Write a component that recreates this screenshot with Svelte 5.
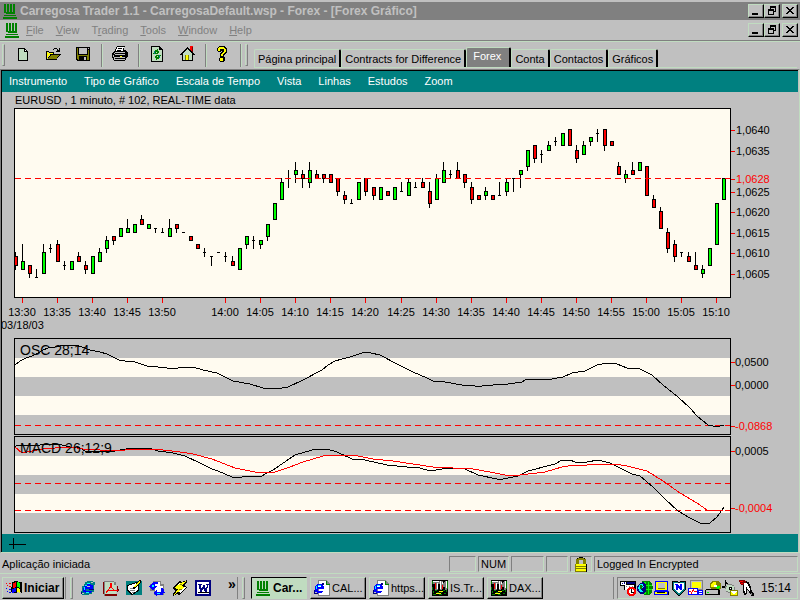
<script>
  const menus = ['File', 'View', 'Trading', 'Tools', 'Window', 'Help'];
  const hot = { Trading: 1 };
  const tools = [['new', 'open', 'save'], ['print'], ['refresh', 'home'], ['help']];
  const tabs = ['Página principal', 'Contracts for Difference', 'Forex', 'Conta', 'Contactos', 'Gráficos'];
  const chartMenus = ['Instrumento', 'Tipo de Gráfico', 'Escala de Tempo', 'Vista', 'Linhas', 'Estudos', 'Zoom'];
  const quick = ['ie', 'pdf', 'desktop', 'sync', 'bolt', 'word'];
  const tasks = [
    ['logo', 'Car...'],
    ['page', 'CAL...'],
    ['page', 'https...'],
    ['tm', 'IS.Tr...'],
    ['tm', 'DAX...']
  ];
  const tray = ['sched', 'globe', 'monitor', 'shield', 'display', 'drive', 'sound', 'pen'];

  // high, body top, body bottom, low (last three digits of 1,0xxx); kind: g rising, r falling, n flat
  const candles = `610 609 607 606 r|612 608 606 606 g|607 607 605 604 r|606 604 604 604 n|612 610 605 605 g|612 611 611 610 n
613 612 608 608 r|608 607 607 606 n|608 608 606 606 g|610 609 608 608 r|608 607 606 605 r|609 609 605 605 g
611 610 608 608 g|614 613 611 610 g|614 614 613 612 r|616 616 614 614 g|618 616 615 615 g|617 617 615 615 g
619 618 617 617 r|617 617 616 616 g|616 616 616 615 n|616 615 615 615 n|618 616 614 614 g|617 617 616 615 r
615 615 615 615 n|614 614 613 613 r|612 612 611 611 r|611 610 610 609 n|609 609 609 607 n|610 610 610 610 n
610 609 609 608 n|609 608 607 607 r|611 611 606 606 g|614 614 612 611 g|614 613 613 611 n|613 613 612 611 g
617 617 614 613 g|622 622 618 618 g|628 627 623 623 g|630 628 628 626 n|632 630 629 627 g|630 629 628 626 r
632 630 627 626 g|630 629 628 628 r|629 629 628 627 r|629 629 627 627 r|628 628 625 624 r|625 624 623 622 r
623 622 622 622 n|627 627 623 623 g|628 628 625 624 r|626 626 624 623 r|626 626 623 623 g|625 625 624 624 r
626 626 623 623 g|627 625 625 625 n|628 627 624 624 g|627 626 626 626 n|628 627 626 626 r|627 625 622 621 r
629 628 623 623 g|632 630 627 627 g|630 629 629 628 n|632 630 628 628 r|629 629 627 626 r|627 626 623 622 r
624 624 623 623 r|626 625 624 623 g|624 624 623 623 r|627 624 624 624 n|628 627 625 624 g|628 628 628 625 n
630 630 629 626 g|635 635 631 630 g|636 636 633 632 r|635 634 634 632 n|637 636 635 635 g|638 637 637 636 n
639 639 636 636 g|640 640 636 636 r|636 635 633 632 r|637 636 634 634 g|638 638 637 636 g|640 639 639 637 n
640 640 636 635 r|637 637 636 636 r|632 631 629 629 r|630 629 628 627 g|632 630 629 629 r|632 632 630 630 g
631 631 624 624 r|624 623 621 621 r|621 620 616 616 r|616 615 611 610 r|613 612 609 608 r|610 610 610 609 n
610 609 608 608 r|610 607 606 606 r|607 606 605 604 g|611 611 607 607 g|622 622 612 612 g|628 628 623 623 g`
    .split(/[|\n]/)
    .map((row, i) => {
      const [h, t, b, l, kind] = row.trim().split(' ');
      const y = (p) => Math.round(129 + (640 - Number(p)) * 4.11);
      return { x: 15 + i * 7 + (i > 50 ? 1 : 0), h: y(h), t: y(t), b: y(b), l: y(l), kind };
    });

  const times = [
    [22, '13:30'], [57, '13:35'], [92, '13:40'], [127, '13:45'], [162, '13:50'], [225, '14:00'], [260, '14:05'],
    [295, '14:10'], [330, '14:15'], [365, '14:20'], [401, '14:25'], [436, '14:30'], [471, '14:35'], [506, '14:40'],
    [541, '14:45'], [576, '14:50'], [611, '14:55'], [646, '15:00'], [681, '15:05'], [716, '15:10']
  ];
  const prices = [
    [130, '1,0640'], [151, '1,0635'], [179, '1,0628', 1], [192, '1,0625'], [212, '1,0620'], [233, '1,0615'],
    [253, '1,0610'], [274, '1,0605'], [362, '0,0500'], [385, '0,0000'], [426, '-0,0868', 1], [451, '0,0005'], [508, '-0,0004', 1]
  ];

  const osc = '15,365 20,361 26,358 32,356 38,353 43,350 48,348 55,347 60,346 75,345 82,347 90,350 100,352 107,354 119,360 125,361 135,362 147,366 158,367 167,368 178,368 182,367 193,367 203,370 217,373 233,381 250,384 263,388 282,388 288,387 303,380 322,370 328,365 335,361 342,359 350,357 362,353 367,352 371,353 380,355 397,364 413,372 427,378 433,381 445,382 462,385 475,386 482,386 493,385 508,384 522,382 527,379 552,379 563,377 572,373 585,371 597,365 608,363 617,364 627,368 640,369 652,375 663,385 678,397 690,408 697,416 708,425 713,426 720,426 724,425';
  const macd = '15,447 17,445 40,445 43,444 57,444 62,445 70,447 80,448 85,451 97,452 107,451 115,451 120,450 132,448 152,449 158,451 173,453 185,456 200,463 212,469 218,471 232,477 242,477 245,476 262,476 265,474 273,470 295,455 312,450 327,449 337,452 352,459 365,460 387,465 407,467 420,468 430,471 442,469 452,468 465,469 478,475 497,479 503,479 518,476 528,471 555,464 562,460 570,460 575,462 587,462 598,460 610,463 620,468 632,474 640,476 653,487 665,499 678,511 690,518 702,524 710,523 717,517 724,507';
  const signal = '15,447 22,453 27,452 37,450 43,449 55,448 58,447 77,448 83,449 100,450 118,451 133,449 163,450 180,452 193,454 212,459 235,468 255,472 275,472 290,467 303,462 323,456 335,455 353,455 373,459 393,461 413,464 433,467 453,468 473,469 490,472 505,475 520,475 545,472 562,467 575,465 587,465 597,464 615,464 627,466 647,471 663,481 680,493 697,503 707,510 717,511 723,510';
</script>

{#snippet icon(name)}
  <svg class="icon" viewBox="0 0 16 16" aria-hidden="true" shape-rendering="crispEdges">
    {#if name === 'logo'}
      <path fill="#008000" d="M2 1h2v8h1V1h2v8h1V1h2v8h1V1h2v10H4v-1H2zM2 12h12v1H2zM1 14h14v2H1z" />
    {:else if name === 'new'}
      <path d="M3 2h7v1h1v1h1v1h1v10H3z" />
      <path fill="#c0dcc0" d="M4 3h5v3h3v8H4z" />
      <path fill="#fff" d="M10 4h1v1h-1z" />
    {:else if name === 'open'}
      <path d="M1 6V5h3v1h5v2H8V7H4V6H2v7h1v1H1zM9 2h3v1H9zM8 3h1v1H8zM12 3h1v1h1V2h1v4h-4V5h1V4h0zM5 8h11v1h-1v1h-1v1h-1v1h-1v2H2v-1h1v-2h1v-1h1z" />
      <path fill="#ff0" d="M2 6h1v1h5v1H5v1H4v1H3v2H2z" />
      <path fill="#808000" d="M6 9h8v1h-1v1h-1v2H3v-1h1v-1h1v-1h1z" />
    {:else if name === 'save'}
      <path d="M1 1h14v14H2v-1H1z" />
      <path fill="#808000" d="M2 2h1v7h10V4h1v10h-2v-4H4v4H3v-1H2z" />
      <path fill="#c0c0c0" d="M4 2h8v6H4zM13 2h1v1h-1zM9 11h2v3H9z" />
    {:else if name === 'print'}
      <path d="M5 0h8v1h-1v3h2v1h1v1h1v5h-1v1h-1v2h-1v1H2v-1H1v-2H0V7h1V6h1V5h1V3h1V1h1z" />
      <path fill="#fff" d="M5 1h7v1h-1v3H4V3h1z" />
      <path fill="#c0c0c0" d="M3 6h10v1H2v1h11v1H1v2h12v1H3v1h10v1H2v-1h0z" />
      <path d="M6 2h4v1H6zM5 4h4v1H5zM13 8h2v1h-2z" />
      <path fill="#ff0" d="M8 10h2v1H8z" />
    {:else if name === 'refresh'}
      <path d="M2 0h9v1h1v1h1v1h1v13H2z" />
      <path fill="#c0dcc0" d="M3 1h7v3h3v11H3z" />
      <path fill="#008000" d="M8 3v1H6v1H5v2H4v1h4V7H7V6h1v2h1V7h1V5H9V3zM8 14v-1h2v-1h1v-2h1V9H8v1h1v1H8V9H7v1H6v2h1v2z" />
      <path fill="#008080" d="M5 5h1v3H5zM10 9h1v3h-1z" />
    {:else if name === 'home'}
      <path fill="#f00" d="M11 0h3v5h-3z" /><path fill="#800000" d="M13 1h1v6h-1z" />
      <path d="M8 1h1v1h1v1h1v1h1v1h1v1h1v1h1v1h1v1h-2v6H3V9H1V8h1V7h1V6h1V5h1V4h1V3h1V2h1z" />
      <path fill="#c0dcc0" d="M8 3h1v1h1v1h1v1h1v1h1v7H4V7h1V6h1V5h1V4h1z" />
      <path fill="#808000" d="M6 9h4v5H6z" /><path fill="#ff0" d="M7 9h2v5H7z" />
    {:else if name === 'help'}
      <path d="M5 0h6v1h1v1h1v5h-1v1h-1v1h-1v2h1v4h-1v1H6v-1H5v-3h1V7h1V6h1V5H7v1H4V5H3V2h1V1h1z" />
      <path fill="#ff0" d="M5 1h5v1h1v1h1v3h-1v1h-1v1H9v2H7V8h1V7h1V6h1V3H6v2H4V2h1zM6 12h3v3H6z" />
    {:else if name === 'ie'}
      <path fill="#008080" d="M7 1h6v1h2v3h-1v7h-2v2H9v1H2v-1H1v-3h1V6h2V4h1V2h2z" />
      <path fill="#0000ff" d="M7 4h4v1h2v4H6v2h6v1h-1v1H5v-1H3V8h1V6h1V5h2z" />
      <path fill="#00ffff" d="M7 3h3v1H7zM5 5h2v1H5zM4 7h1v3H4zM6 12h3v1H6z" />
      <path fill="#c0c0c0" d="M7 6h3v1H7zM11 2h2v1h-2zM2 13h2v1H2z" /><path fill="#000080" d="M9 9h5v1H9zM1 12h1v2H1z" />
    {:else if name === 'pdf'}
      <path fill="#808080" d="M1 1h10v1h2v14H1z" /><path fill="#c0dcc0" d="M2 2h9v3h2v9H2z" />
      <path fill="#800000" d="M0 2h1v12H0zM2 14h12v2H2zM14 6h1v3h1v2h-1v1h-1z" />
      <path fill="none" stroke="#f00" d="M3 13l5-7-1-3h1v4l3 3h4M5 10h6" />
    {:else if name === 'desktop'}
      <path fill="#008080" d="M0 1h16v14H0z" /><path d="M1 5l9-3 3 3v6l-7 4-5-4z" />
      <path fill="#fff" d="M2 6l8-3 2 3v4l-6 4-4-4z" /><path fill="#808080" d="M4 8h3v1H4zM4 10h5v1H4zM6 12h2v1H6z" />
      <path d="M13 0h2v2L9 9H7V8z" /><path fill="#ff0" d="M13 1h1v1L9 7H8z" />
    {:else if name === 'sync'}
      <path fill="#808080" d="M4 1h8v3h3v11H5v-4H1V4h3z" /><path fill="#fff" d="M6 2h5v4h3v8H6z" />
      <path fill="#0000ff" d="M1 6l3-4h5v2H6v2h2L4 11 0 6zM14 8l2 5h-2v2H8v1L4 13l4-4v3h4V8z" />
      <path fill="#00ffff" d="M3 5h2v2H3zM8 13h3v1H8z" />
    {:else if name === 'bolt'}
      <path d="M0 8l8-7 2 1 5-2v2l-2 3 2 3-8 7-2-1-4 2v-2l2-3z" />
      <path fill="#fff" d="M2 8l6-6 1 3H6zM8 13l6-6-4 1-3 3z" />
      <path fill="#ff0" d="M14 1L9 6l4 1-7 5-4 3 4-6-4-1 7-5z" /><path fill="#808000" d="M7 9h3v1H7zM8 4h2v1H8z" />
    {:else if name === 'word'}
      <path fill="#000080" d="M0 0h16v16H0z" /><path fill="#fff" d="M2 2h12v12H2z" />
      <path fill="#000080" d="M3 4h4v1H6l1 5 1-5h2l1 5 1-5h-1V4h3v1h-1l-1 7h-2L8 8l-1 4H5L4 5H3z" /><path d="M3 12h11v1H3z" />
    {:else if name === 'page'}
      <path fill="#808080" d="M4 0h9v1h1v1h1v1h1v13H4z" /><path fill="#fff" d="M5 1h7v4h3v10H5z" /><path fill="#008000" d="M12 1h1v3h3v1h-4z" />
      <path fill="#00f" d="M3 4h5v1h1v1h1v3H4v2h5v1H8v1H3v-1H1V6h1V5h1z" /><path fill="#fff" d="M4 6h3v1H4z" />
      <path fill="#00ffff" d="M4 5h3v1H4zM2 6h1v3H2z" /><path fill="#000080" d="M8 3h2v2H8zM0 10h1v3h3v1H0z" />
    {:else if name === 'tm'}
      <path d="M0 0h16v16H0z" /><path fill="#008000" d="M0 1h1v3H0zM3 10h2v1H3zM5 12h2v1H5zM9 11h1v2H9zM12 13h2v1h-2zM1 14h3v1H1zM14 10h1v2h-1zM7 14h3v1H7zM0 7h1v3H0zM1 11h1v2H1zM11 10h2v1h-2zM15 1h1v8h-1z" />
      <path fill="#808080" d="M1 1h7v3H6v6H3V4H1zM8 1h3l1 3 1-3h2v9h-2V6l-1 2-2-2v4H8z" />
      <path fill="#fff" d="M1 1h6v1H1zM5 3h1v6H5zM8 1h1v8H8zM14 1h1v7h-1zM10 2h1v2h-1z" />
      <path fill="#f00" d="M3 3h1v6H3zM10 5h1v4h-1z" /><path fill="#ff0" d="M7 11h4v1H7zM4 13h5v1H4z" />
    {:else if name === 'sched'}
      <path d="M0 1h16v9H4V6H0z" /><path fill="#fff" d="M1 2h5v3H1zM5 5h9v5H5z" /><path fill="#000080" d="M7 2h8v2H7zM2 3h1v1H2zM4 2h1v2H4z" />
      <path fill="#808080" d="M6 6h1v1H6zM9 6h1v1H9zM12 6h1v1h-1z" />
      <path fill="#f00" d="M9 7h4l3 3v3l-3 3H9l-2-3v-3z" /><path fill="#fff" d="M10 9h3l1 2v2l-2 1h-2l-1-2z" /><path d="M11 9h1v3h2v1h-3z" />
    {:else if name === 'globe'}
      <path fill="#008000" d="M5 1h7l3 3 1 3-1 5-3 3H8l-3-2z" /><path fill="#0f0" d="M7 2h2v12H7zM11 2h1v12h-1zM5 5h10v1H5zM5 9h10v1H5z" />
      <path fill="#000080" d="M3 3l4-1 2 3v6l-3 3H3l-3-4V6z" /><path fill="#00ffff" d="M3 4h3l1 3-3 2 2 3H3L1 8z" /><path fill="#008000" d="M3 5l3 1-1 3H3z" />
    {:else if name === 'monitor'}
      <path fill="#00f" d="M1 1h13v10h1v4H0v-4h1z" /><path fill="#ff0" d="M2 2h11v8H2zM1 12h12v2H1z" />
      <path fill="#808000" d="M4 4h7v5H4z" /><path fill="#c0c0c0" d="M4 3h7v5H4z" /><path d="M3 12h8v1H3zM14 12h1v3h-1z" />
    {:else if name === 'shield'}
      <path d="M1 1h5l2 1 2-1h5v8l-4 5-3 2-3-2-4-5z" /><path fill="#008080" d="M2 2h4l2 1 2-1h4v7l-3 4-3 2-3-2-3-4z" />
      <path fill="#fff" d="M3 3h10v5l-5 6-5-6z" /><path fill="#00f" d="M4 4h3l2 3V4h2v6H9L7 7v3H5V5H4z" />
    {:else if name === 'display'}
      <path fill="#808080" d="M2 0h13v10H2z" /><path fill="#c0c0c0" d="M3 1h11v8H3z" /><path fill="#ff0" d="M4 2h9v6H4z" />
      <path fill="#00f" d="M0 8h10v7H0zM10 10h5v5h-5z" /><path fill="#fff" d="M1 9h8v5H1zM11 11h3v1h-3zM11 13h3v1h-3z" />
      <path fill="#f00" d="M1 11h2v1H1zM3 12h1v2H3zM4 10h1v2H4zM5 9h1v2H5zM6 11h3v1H6z" />
    {:else if name === 'drive'}
      <path fill="#808000" d="M7 1h6l3 3v4l-3 3H8L5 8V4z" /><path fill="#ff0" d="M8 2h3v4l-5 1V4z" /><path fill="#0f0" d="M11 6h4v2l-3 2z" />
      <path fill="#fff" d="M9 5h3v2H9z" /><path d="M1 9h13v1h1v5H0v-5h1z" /><path fill="#c0c0c0" d="M1 10h12v4H1z" /><path fill="#0f0" d="M2 12h2v1H2z" />
    {:else if name === 'sound'}
      <path d="M3 0h1v2h1v1h1v1H4v4H1V6h2zM0 6h1v2H0z" /><path fill="#808080" d="M5 4h5v1h2v2h1v4h-1v2H6v-1H4V9H3V6h2z" /><path fill="#c0dcc0" d="M5 5h5v1h2v5h-2v1H6v-1H4V7h1z" />
      <path d="M7 7h3v3H7z" /><path fill="#fff" d="M8 8h1v1H8z" /><path fill="#808000" d="M8 10h8v6H8z" /><path fill="#ff0" d="M9 11h6v4H9z" /><path fill="#fff" d="M9 12l3 2 3-2v-1H9z" />
    {:else if name === 'pen'}
      <path d="M5 1h3v1h2v2h1v2h1v4h1v2h1v1h1v3h-3v-2h-1v-1h-1v-2H9v-1H8v4H7v1H5v-2H4V5h1z" />
      <path fill="#fff" d="M5 3h3v1h1v2h1v2h1v3h-1v-1H9V9H8V7H7v6H6v-2H5z" /><path fill="#800000" d="M0 0h6v1h1v2H5v2H2V4H1V2H0z" />
      <path fill="#f00" d="M1 1h3v1H1zM2 3h2v1H2z" /><path fill="#808080" d="M12 13h1v2h-1z" />
    {:else if name === 'flag'}
      <path d="M6 2l4-1 4 1h2v11l-3-1-4 1-4-1z" /><path fill="#f00" d="M7 3l3-1v5L7 8z" /><path fill="#0f0" d="M11 2l3 1v5l-3-1z" />
      <path fill="#00f" d="M6 9l4-1v4l-4 1z" /><path fill="#ff0" d="M11 8l3 1v4l-3-1z" />
      <path fill="#f00" d="M0 3h1v1H0zM3 3h2v1H3zM1 5h1v1H1zM3 6h2v1H3z" /><path fill="#00f" d="M0 8h1v1H0zM3 9h2v1H3zM1 11h1v1H1zM3 12h2v1H3z" />
    {:else if name === 'lock'}
      <path fill="#808000" d="M6 0h4v1h2v1h1v5h1v8H2V7h1V2h1V1h2z" /><path fill="#c0c0c0" d="M6 3h4v4H6z" />
      <path d="M6 0h4v1H6zM4 1h1v1H4zM11 1h1v1h-1zM13 7h1v8h-1z" />
      <path fill="#ff0" d="M3 7h10v2H3zM3 10h10v1H3zM3 12h10v2H3z" />
    {/if}
  </svg>
{/snippet}

{#snippet windowButtons()}
  <div class="winbtns">
    <button aria-label="Minimize"><svg viewBox="0 0 12 10"><path d="M2 7h6v2H2z" /></svg></button>
    <button aria-label="Restore"><svg viewBox="0 0 12 10"><path d="M4 0h6v6H8v3H2V3h2zM5 2v1h3v2h1V2zM3 5v3h4V5z" fill-rule="evenodd" /></svg></button>
    <button aria-label="Close"><svg viewBox="0 0 12 10"><path d="M2 1h2v1h1v1h2V2h1V1h2v1H9v1H8v1H7v1h1v1h1v1h1v1H8V7H7V6H5v1H4v1H2V7h1V6h1V5h1V4H4V3H3V2H2z" /></svg></button>
  </div>
{/snippet}

<div class="app">
  <header class="title">
    {@render icon('logo')}
    <h1>Carregosa Trader 1.1 - CarregosaDefault.wsp - Forex - [Forex Gráfico]</h1>
    {@render windowButtons()}
  </header>

  <nav class="menubar">
    {@render icon('logo')}
    {#each menus as m}
      {@const k = hot[m] ?? 0}
      <button>{m.slice(0, k)}<u>{m[k]}</u>{m.slice(k + 1)}</button>
    {/each}
    {@render windowButtons()}
  </nav>

  <div class="toolbar">
    <span class="grip"></span>
    {#each tools as group}
      <div class="group" class:last={group[0] === 'help'}>
        {#each group as t}
          <button aria-label={t}>{@render icon(t)}</button>
        {/each}
      </div>
    {/each}
    <span class="grip second"></span>
    <div class="tabs">
      {#each tabs as t}
        <button class:active={t === 'Forex'}>{t}</button>
      {/each}
    </div>
  </div>

  <main>
    <nav class="chartmenu">
      {#each chartMenus as m}<button>{m}</button>{/each}
    </nav>

    <svg class="chart" viewBox="2 92 796 442" role="img" aria-label="EURUSD">
      <text x="15" y="104">EURUSD , 1 minuto, # 102, REAL-TIME data</text>
      <g shape-rendering="crispEdges">
        <rect x="14" y="108" width="717" height="190" />
        <rect x="15" y="109" width="715" height="188" fill="#fffbf0" />
        {#each candles as c, i}
          <rect x={c.x} y={c.h} width="1" height={c.l - c.h + 1} />
          {#if c.kind === 'n'}
            <rect x={c.x - 1} y={c.t} width="3" height="1" />
          {:else}
            <rect x={i ? c.x - 1 : c.x} y={c.t} width={i ? 4 : 3} height={c.b - c.t + 1} />
            <rect x={c.x} y={c.t + 1} width="2" height={c.b - c.t - 1} fill={c.kind === 'g' ? '#0f0' : '#f00'} />
          {/if}
        {/each}
        <path class="dash" d="M15 178.500H730" />

        {#each [338, 436] as top}
          <rect x="14" y={top} width="717" height="97" />
          <rect x="15" y={top + 1} width="715" height="95" fill="#c0c0c0" />
          <rect x="15" y={top + 20} width="715" height="19" fill="#fffbf0" />
          <rect x="15" y={top + 58} width="715" height="19" fill="#fffbf0" />
        {/each}
        <path class="dash" d="M15 425.500H730M15 483.500H730M15 510.500H730" />
        {#each times as [x]}<rect {x} y="298" width="1" height="5" fill="#f00" />{/each}
        {#each prices as [y]}<rect x="731" {y} width="4" height="1" fill="#f00" />{/each}
        <polyline points={osc} />
        <polyline points={macd} />
        <polyline points={signal} class="red" />
      </g>
      <text class="study" x="20" y="355">OSC 28;14</text>
      <text class="study" x="20" y="453">MACD 26;12;9</text>
      {#each times as [x, label]}<text {x} y="316" text-anchor="middle">{label}</text>{/each}
      {#each prices as [y, label, red]}
        <text x={label[0] === '1' ? 736 : 735} y={y + 4} fill={red ? '#f00' : '#000'}>{label}</text>
      {/each}
      <text x="1" y="329">03/18/03</text>
    </svg>

    <div class="cursorbar">
      <svg viewBox="0 0 18 12" aria-hidden="true"><path d="M0 6h17v1H0zM4 0h1v11H4z" /></svg>
    </div>
  </main>

  <footer class="status">
    <span class="msg">Aplicação iniciada</span>
    <span class="cell w27"></span>
    <span class="cell w31">NUM</span>
    <span class="cell w33"></span>
    <span class="cell w22"></span>
    <span class="cell w22">{@render icon('lock')}</span>
    <span class="cell secure">Logged In Encrypted</span>
  </footer>

  <div class="taskbar">
    <button class="start">{@render icon('flag')}Iniciar</button>
    <span class="grip pair"></span>
    <div class="quick">
      {#each quick as q}<button aria-label={q}>{@render icon(q)}</button>{/each}
    </div>
    <span class="more">»</span>
    <span class="grip pair"></span>
    <div class="tasks">
      {#each tasks as [ic, label], i}
        <button class:pressed={i === 0}>{@render icon(ic)}{label}</button>
      {/each}
    </div>
    <span class="divider"></span>
    <div class="tray">
      {#each tray as t}{@render icon(t)}{/each}
      <time>15:14</time>
    </div>
  </div>
</div>

<style>
  :global(body) {
    background: #c0c0c0;
  }
  .app {
    --hi: #c0dcc0;
    display: flex;
    flex-direction: column;
    min-height: 100vh;
    background: #c0c0c0;
    color: #000;
    font: 11px/14px 'Liberation Sans', Arial, sans-serif;
  }
  .app * {
    box-sizing: border-box;
  }
  button {
    margin: 0;
    padding: 0;
    border: 0;
    background: none;
    color: inherit;
    font: inherit;
    white-space: nowrap;
  }
  .icon {
    display: block;
    flex: none;
    width: 16px;
    height: 16px;
  }
  .title {
    display: flex;
    align-items: center;
    height: 18px;
    margin-top: 2px;
    padding: 0 2px;
    background: #808080;
    color: #c0c0c0;
  }
  h1 {
    flex: 1;
    margin: 0 0 0 2px;
    font-size: 12px;
    line-height: 18px;
    font-weight: bold;
  }
  .winbtns {
    display: flex;
    margin-left: auto;
  }
  .winbtns button {
    width: 16px;
    height: 14px;
    padding: 1px;
    border: 1px solid #000;
    border-top-color: var(--hi);
    border-left-color: var(--hi);
    background: #c0c0c0;
    box-shadow: inset -1px -1px #808080;
  }
  .winbtns button:last-child {
    margin-left: 2px;
  }
  .winbtns svg {
    display: block;
    width: 12px;
    height: 10px;
    shape-rendering: crispEdges;
  }
  .menubar {
    display: flex;
    align-items: center;
    gap: 12px;
    height: 20px;
    padding: 0 2px 0 4px;
    color: #808080;
  }
  .menubar .icon {
    margin-right: -6px;
  }
  .toolbar {
    display: flex;
    height: 29px;
    border-top: 1px solid #808080;
    box-shadow: inset 0 1px var(--hi);
    padding: 3px 3px 0 2px;
  }
  .grip {
    flex: none;
    width: 3px;
    height: 22px;
    border: 1px solid #808080;
    border-top-color: var(--hi);
    border-left-color: var(--hi);
  }
  .group {
    display: flex;
    gap: 14px;
    padding: 2px 10px 0;
    height: 23px;
    border-right: 1px solid #808080;
    box-shadow: 1px 0 var(--hi);
  }
  .group.last {
    padding-left: 8px;
  }
  .grip.second {
    margin-left: 4px;
  }
  .group button {
    height: 16px;
  }
  .tabs {
    display: flex;
    flex: 1;
    align-items: flex-end;
    height: 24px;
    margin-left: 6px;
    border-bottom: 1px solid var(--hi);
  }
  .tabs button {
    height: 18px;
    padding: 0 3px;
    border: 1px solid var(--hi);
    border-right: 2px solid #000;
    border-bottom: 0;
    border-radius: 2px 2px 0 0;
  }
  .tabs .active {
    height: 20px;
    padding: 0 8px 4px 6px;
    background: #808080;
    color: #fff;
  }
  main {
    border: 1px solid;
    border-color: #808080 var(--hi) var(--hi) #808080;
  }
  .chartmenu {
    display: flex;
    gap: 17px;
    height: 22px;
    padding: 0 7px 2px;
    border-top: 1px solid #000;
    border-left: 1px solid #000;
    margin-right: 1px;
    background: #008080;
    color: #fff;
  }
  .chart {
    display: block;
    width: calc(100% - 1px);
    height: auto;
    border-left: 1px solid #000;
    overflow: hidden;
  }
  .chart .study {
    font-size: 14px;
  }
  .dash {
    fill: none;
    stroke: #f00;
    stroke-dasharray: 6 4;
  }
  polyline {
    fill: none;
    stroke: #000;
  }
  .red {
    stroke: #f00;
  }
  .cursorbar {
    height: 18px;
    margin-right: 1px;
    padding: 4px 0 0 7px;
    border-left: 1px solid #000;
    background: #008080;
  }
  .cursorbar svg {
    display: block;
    width: 18px;
    height: 12px;
    shape-rendering: crispEdges;
  }
  .status {
    display: flex;
    flex: 1;
    align-items: center;
    gap: 2px;
    min-height: 20px;
    padding: 1px 2px 0;
  }
  .msg {
    flex: 1;
  }
  .cell {
    height: 16px;
    border: 1px solid var(--hi);
    border-top-color: #808080;
    border-left-color: #808080;
    padding-left: 2px;
  }
  .w22 { width: 22px; }
  .w27 { width: 27px; }
  .w31 { width: 31px; }
  .w33 { width: 33px; }
  .secure {
    width: 204px;
  }
  .taskbar {
    display: flex;
    align-items: center;
    height: 27px;
    padding: 1px 2px 0;
    border-top: 1px solid var(--hi);
  }
  .start,
  .tasks button {
    display: flex;
    align-items: center;
    gap: 2px;
    height: 22px;
    padding: 0 3px;
    border: 1px solid #000;
    border-top-color: var(--hi);
    border-left-color: var(--hi);
    box-shadow: inset -1px -1px #808080;
  }
  .start {
    width: 62px;
    font-size: 12px;
    font-weight: bold;
  }
  .grip.pair {
    margin-left: 6px;
    box-shadow: -4px 0 #c0c0c0, -5px 0 #808080;
  }
  .quick {
    display: flex;
    gap: 7px;
    margin-left: 7px;
  }
  .more {
    width: 25px;
    padding-left: 17px;
    font-size: 14px;
    font-weight: bold;
    margin-bottom: 8px;
  }
  .tasks {
    display: flex;
    gap: 3px;
    margin-left: 6px;
  }
  .tasks button {
    width: 56px;
  }
  .tasks .pressed {
    border-color: #000 var(--hi) var(--hi) #000;
    background: var(--hi);
    box-shadow: none;
    font-size: 12px;
    font-weight: bold;
  }
  .divider {
    height: 22px;
    margin-left: auto;
    margin-right: 3px;
    border-left: 1px solid #808080;
  }
  .tray {
    display: flex;
    align-items: center;
    gap: 1px;
    width: 181px;
    height: 22px;
    padding: 0 6px 0 2px;
    border: 1px solid var(--hi);
    border-top-color: #808080;
    border-left-color: #808080;
  }
  time {
    margin-left: auto;
    font-size: 12px;
  }
</style>
